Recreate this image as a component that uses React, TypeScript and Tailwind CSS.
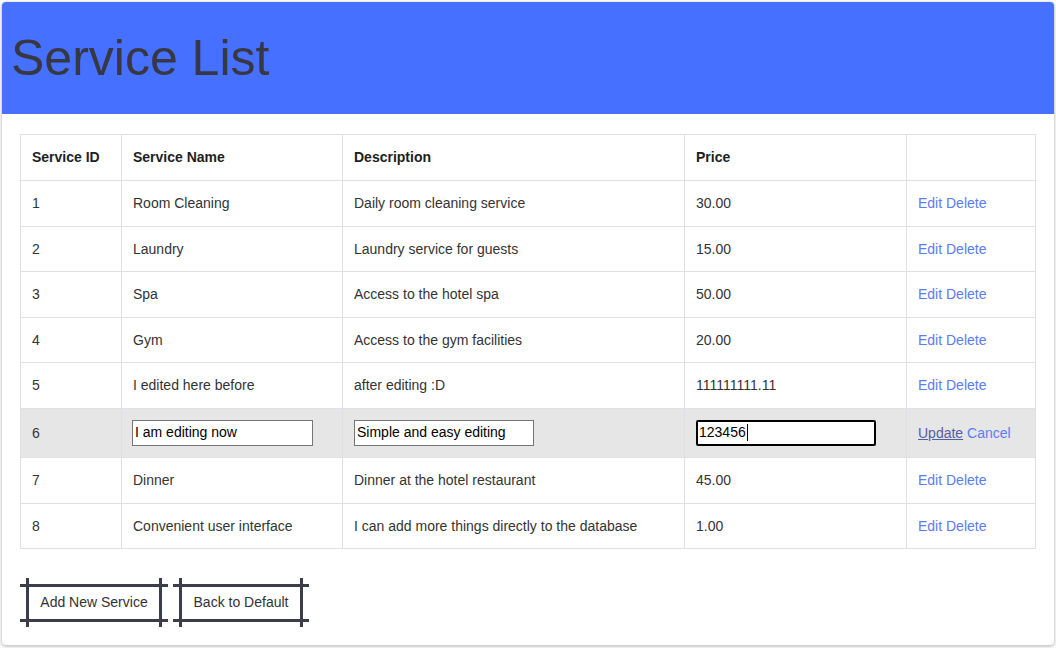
import React from "react";

const rows = [
  { id: "1", name: "Room Cleaning", desc: "Daily room cleaning service", price: "30.00" },
  { id: "2", name: "Laundry", desc: "Laundry service for guests", price: "15.00" },
  { id: "3", name: "Spa", desc: "Access to the hotel spa", price: "50.00" },
  { id: "4", name: "Gym", desc: "Access to the gym facilities", price: "20.00" },
  { id: "5", name: "I edited here before", desc: "after editing :D", price: "111111111.11" },
  { id: "6", name: "I am editing now", desc: "Simple and easy editing", price: "123456", editing: true },
  { id: "7", name: "Dinner", desc: "Dinner at the hotel restaurant", price: "45.00" },
  { id: "8", name: "Convenient user interface", desc: "I can add more things directly to the database", price: "1.00" },
];

function Btn({ label, w }: { label: string; w: string }) {
  return (
    <div className="flex h-[38px] border-y-[3px] border-[#3b3d4a] px-[6px]">
      <div
        className={`-mt-[9px] flex h-[49px] items-center justify-center border-x-[3px] border-[#3b3d4a] text-[14px] text-[#333] ${w}`}
      >
        {label}
      </div>
    </div>
  );
}

export default function App() {
  return (
    <div className="h-[648px] w-[1056px] bg-white p-[2px] font-['Liberation_Sans',Arial,sans-serif]">
      <div className="h-[643px] w-[1052px] overflow-hidden rounded-[4px] bg-white shadow-[0_1px_3px_1px_rgba(0,0,0,0.22)]">
        <div className="flex h-[112px] items-center bg-[#4670ff] pl-[9px]">
          <h1 className="text-[50px] leading-none text-[#373842]">Service List</h1>
        </div>
        <div className="px-[18px] pt-[20px]">
          <table className="w-[1015px] table-fixed border-collapse text-[14px] text-[#333]">
            <colgroup>
              <col className="w-[101px]" />
              <col className="w-[221px]" />
              <col className="w-[342px]" />
              <col className="w-[222px]" />
              <col className="w-[129px]" />
            </colgroup>
            <thead>
              <tr>
                {["Service ID", "Service Name", "Description", "Price", ""].map((h, i) => (
                  <th
                    key={i}
                    className="border border-[#dfe0e5] px-[11px] py-3 text-left align-middle font-bold leading-[21px] text-[#1e1e1e]"
                  >
                    {h}
                  </th>
                ))}
              </tr>
            </thead>
            <tbody>
              {rows.map((r) =>
                r.editing ? (
                  <tr key={r.id} className="bg-[#e6e6e6]">
                    <td className="border border-[#dfe0e5] px-[11px] py-[11px] align-middle leading-[20px]">{r.id}</td>
                    <td className="border border-[#dfe0e5] px-[10px] py-[11px] align-middle">
                      <div className="flex h-[26px] w-[181px] items-center border border-[#767676] bg-white px-[2px] text-[14px] text-black">
                        {r.name}
                      </div>
                    </td>
                    <td className="border border-[#dfe0e5] px-[11px] py-[11px] align-middle">
                      <div className="flex h-[26px] w-[180px] items-center border border-[#767676] bg-white px-[2px] text-[14px] text-black">
                        {r.desc}
                      </div>
                    </td>
                    <td className="border border-[#dfe0e5] px-[11px] py-[11px] align-middle">
                      <div className="flex h-[26px] w-[180px] items-center rounded-[2px] border-2 border-black bg-white px-[1px] text-[14px] text-black">
                        {r.price}
                        <span className="ml-[1px] inline-block h-[17px] w-[1px] bg-black" />
                      </div>
                    </td>
                    <td className="border border-[#dfe0e5] px-[11px] py-[11px] align-middle leading-[20px]">
                      <span className="text-[#525ea6] underline">Update</span>{" "}
                      <span className="text-[#5b7cf5]">Cancel</span>
                    </td>
                  </tr>
                ) : (
                  <tr key={r.id}>
                    <td className="border border-[#dfe0e5] px-[11px] py-3 align-middle leading-[20.6px]">{r.id}</td>
                    <td className="border border-[#dfe0e5] px-[11px] py-3 align-middle leading-[20.6px]">{r.name}</td>
                    <td className="border border-[#dfe0e5] px-[11px] py-3 align-middle leading-[20.6px]">{r.desc}</td>
                    <td className="border border-[#dfe0e5] px-[11px] py-3 align-middle leading-[20.6px]">{r.price}</td>
                    <td className="border border-[#dfe0e5] px-[11px] py-3 align-middle leading-[20.6px] text-[#5b7cf5]">
                      Edit Delete
                    </td>
                  </tr>
                )
              )}
            </tbody>
          </table>
          <div className="mt-[35px] flex gap-[5px]">
            <Btn label="Add New Service" w="w-[136px]" />
            <Btn label="Back to Default" w="w-[124px]" />
          </div>
        </div>
      </div>
    </div>
  );
}
